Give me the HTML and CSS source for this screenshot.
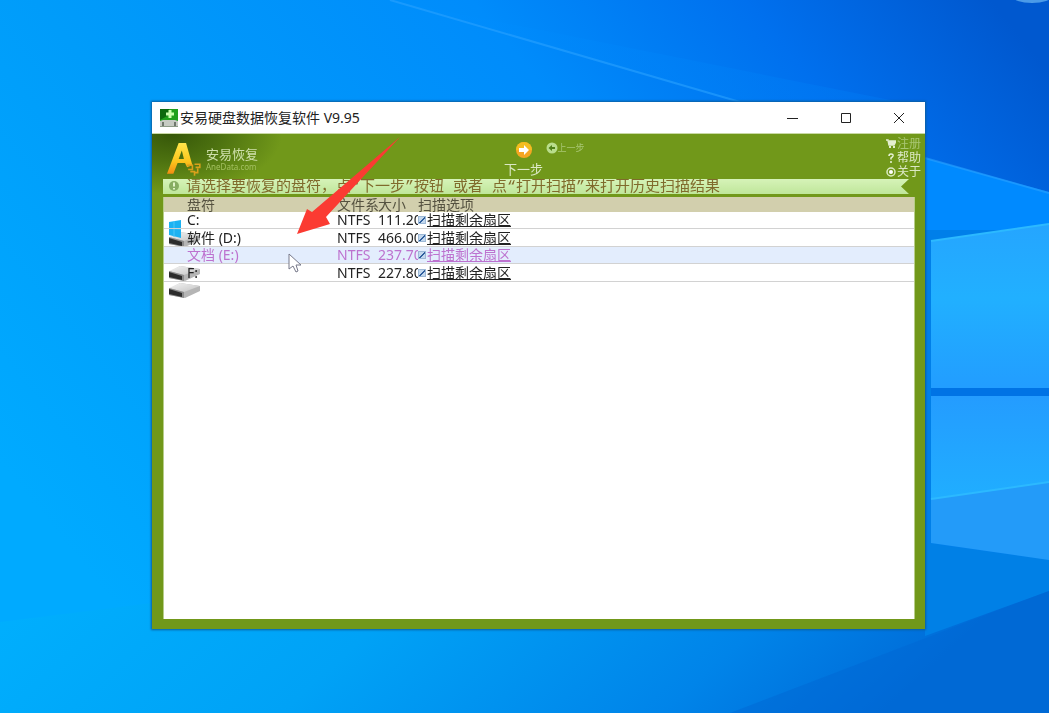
FILE: index.html
```html
<!DOCTYPE html>
<html lang="zh-CN">
<head>
<meta charset="utf-8">
<title>安易硬盘数据恢复软件 V9.95</title>
<link rel="stylesheet" href="styles.css">
</head>
<body>
<svg class="wallpaper" viewBox="0 0 1049 713" preserveAspectRatio="none" aria-hidden="true">
  <defs>
    <linearGradient id="sky" x1="0" y1=".65" x2="1" y2=".1">
      <stop offset="0" stop-color="#00aaff"/><stop offset=".3" stop-color="#009cfa"/><stop offset=".62" stop-color="#008cfb"/><stop offset=".82" stop-color="#0070ee"/><stop offset="1" stop-color="#0058cf"/>
    </linearGradient>
    <linearGradient id="floor" x1="0" y1="0" x2="1" y2=".2">
      <stop offset="0" stop-color="#00b2ff"/><stop offset=".45" stop-color="#00a2f6"/><stop offset=".8" stop-color="#0084e9"/><stop offset="1" stop-color="#006cd8"/>
    </linearGradient>
    <linearGradient id="edge" x1="0" y1="0" x2="1" y2="0">
      <stop offset="0" stop-color="#0091ff"/><stop offset="1" stop-color="#0076f2"/>
    </linearGradient>
    <linearGradient id="pane" x1="0" y1="0" x2="0" y2="1">
      <stop offset="0" stop-color="#25a5ff"/><stop offset=".45" stop-color="#21b0ff"/><stop offset="1" stop-color="#229dff"/>
    </linearGradient>
    <linearGradient id="pane2" x1="0" y1="0" x2="0" y2="1">
      <stop offset="0" stop-color="#249cff"/><stop offset="1" stop-color="#20aeff"/>
    </linearGradient>
  </defs>
  <rect width="1049" height="713" fill="url(#sky)"/>
  <path d="M0 622L152 603L925 520L1049 540V713H0z" fill="url(#floor)"/>
  <path d="M390 0L740 102H925V160L1049 193V300H900V102z" fill="url(#edge)" opacity=".35"/>
  <path d="M925 158L1049 192V240H925z" fill="#008aff"/>
  <path d="M390 0L740 102M925 158L1049 193" stroke="#2aa2ff" stroke-width="2" opacity=".6"/>
  <path d="M925 230H1049V560H925z" fill="#007fe9"/>
  <path d="M925 543L1049 560V591L925 636z" fill="#0080e6"/>
  <path d="M1049 591L730 713H1049z" fill="#0066d3" opacity=".45"/>
  <path d="M931 241L1049 224V388H931z" fill="url(#pane)"/>
  <path d="M931 388H1049V396H931z" fill="#0073e5"/>
  <path d="M931 396H1049V482L931 499z" fill="url(#pane2)"/>
  <path d="M931 499L1049 482V560L931 543z" fill="#239bf9"/>
  <path d="M931 499L1049 482M931 241L1049 224" stroke="#2cb9ff" stroke-width="2"/>
  <ellipse cx="1032" cy="-4" rx="20" ry="7" fill="#4b9be8"/>
</svg>

<main class="desktop">
  <section class="window">
    <header class="titlebar">
      <svg class="app-icon" viewBox="0 0 18 18" aria-hidden="true">
        <rect width="18" height="18" fill="#8d9b88"/><rect width="18" height="12" fill="#1fa01c"/><path d="M0 0H9V6L0 11z" fill="#0c6a0d"/>
        <path d="M10 1v8M6 5h8" stroke="#c9ffae" stroke-width="3"/><path d="M0 12L3 11H15L18 12V17H0z" fill="#c6cbc3"/><path d="M3 13v4M15 13v4" stroke="#6f776d" stroke-width="2"/>
      </svg>
      <h1 class="title">安易硬盘数据恢复软件 V9.95</h1>
      <div class="controls">
        <button type="button" aria-label="最小化"><svg viewBox="0 0 12 12"><path d="M0 6.5H11"/></svg></button>
        <button type="button" aria-label="最大化"><svg viewBox="0 0 12 12"><path d="M1.500 1.500H10.500V10.500H1.500z"/></svg></button>
        <button type="button" aria-label="关闭"><svg viewBox="0 0 12 12"><path d="M1 1L11 11M11 1L1 11"/></svg></button>
      </div>
    </header>

    <div class="body">
      <div class="toolbar">
        <div class="brand">
          <svg class="logo" viewBox="0 0 34 34" aria-hidden="true">
            <defs><linearGradient id="gold" x1="0" y1="0" x2="0" y2="1"><stop offset="0" stop-color="#ffe54a"/><stop offset=".6" stop-color="#fbc51c"/><stop offset="1" stop-color="#f28d13"/></linearGradient></defs>
            <path fill="url(#gold)" fill-rule="evenodd" d="M11 0H18L24 21L19 23L17 19H10L6 29H0zM14 7L11 15H16z"/>
            <path d="M19 21h5v4h-4M26 20h5v3h-4M22 27h4v4M29 24v4h-3" fill="none" stroke="#d9a01b" stroke-width="1.500"/>
          </svg>
          <div class="brand-text"><span class="brand-name">安易恢复</span><span class="brand-site">AneData.com</span></div>
        </div>
        <nav class="steps">
          <button type="button" class="step next">
            <svg viewBox="0 0 18 18" aria-hidden="true"><circle cx="9" cy="9" r="8" fill="#f5a623"/><path d="M1 9a8 8 0 0 1 16 0z" fill="#f3be20"/><path d="M4 7H9V4L14 9L9 14V11H4z" fill="#fff"/></svg>
            <span>下一步</span>
          </button>
          <button type="button" class="step prev" disabled>
            <svg viewBox="0 0 12 12" aria-hidden="true"><circle cx="6" cy="6" r="5.500" fill="#b9dd8c"/><path d="M9 5H6V3L2.500 6L6 9V7H9z" fill="#4f8118"/></svg>
            <span>上一步</span>
          </button>
        </nav>
        <nav class="links">
          <a href="#register" class="dim"><svg viewBox="0 0 10 10"><path d="M0 1H2L3 6H8L10 2H3M3 3.500H9M3 5H8" fill="none" stroke="#e4efcf" stroke-width="1.500"/><path d="M3 8h2M7 8h2" stroke="#e4efcf" stroke-width="2"/></svg>注册</a>
          <a href="#help"><svg viewBox="0 0 10 10"><path d="M3 3Q3 1 5 1Q7.500 1 7 3Q6.500 4 5 5V6.500M5 8v2" fill="none" stroke="#e9f3d8" stroke-width="1.500"/></svg>帮助</a>
          <a href="#about"><svg viewBox="0 0 10 10"><circle cx="5" cy="5" r="4" fill="none" stroke="#dcebc2" stroke-width="1.500"/><circle cx="5" cy="5" r="2" fill="#fff"/></svg>关于</a>
        </nav>
      </div>

      <div class="hint">
        <svg class="info" viewBox="0 0 12 12" aria-hidden="true"><circle cx="6" cy="6" r="5" fill="#86ad62"/><path d="M6 2.500v4M6 8v1.500" stroke="#dff3c8" stroke-width="2"/></svg>
        <p>请选择要恢复的盘符，点“下一步”按钮 或者 点“打开扫描”来打开历史扫描结果</p>
      </div>

      <div class="list">
        <table>
          <colgroup><col class="c-name"><col class="c-fs"><col class="c-size"><col></colgroup>
          <thead><tr><th>盘符</th><th>文件系</th><th>大小</th><th>扫描选项</th></tr></thead>
          <tbody>
            <tr><td>C:</td><td>NTFS</td><td>111.20</td><td><label><input type="checkbox" checked><span>扫描剩余扇区</span></label></td></tr>
            <tr><td>软件 (D:)</td><td>NTFS</td><td>466.00</td><td><label><input type="checkbox" checked><span>扫描剩余扇区</span></label></td></tr>
            <tr class="active"><td>文档 (E:)</td><td>NTFS</td><td>237.70</td><td><label><input type="checkbox" checked><span>扫描剩余扇区</span></label></td></tr>
            <tr><td>F:</td><td>NTFS</td><td>227.80</td><td><label><input type="checkbox" checked><span>扫描剩余扇区</span></label></td></tr>
          </tbody>
        </table>
        <svg class="drives" viewBox="0 0 40 90" aria-hidden="true">
          <defs>
            <linearGradient id="metal" x1="0" y1="0" x2="1" y2="1"><stop offset="0" stop-color="#f4f4f4"/><stop offset="1" stop-color="#c2c2c2"/></linearGradient>
            <g id="drive"><path d="M0 6L11 0L31 3V8L16 15L0 12z" fill="#b5b5b5"/><path d="M0 5L11 0L31 3L15 9z" fill="url(#metal)"/><path d="M0 5L15 9V15L0 12z" fill="#8b8b8b"/><path d="M0 6L13 10V14L0 11z" fill="#2c2c2c"/></g>
            <clipPath id="cut"><path d="M0 0H40V14H0z"/></clipPath>
          </defs>
          <g transform="translate(5 21)" clip-path="url(#cut)"><use href="#drive"/></g>
          <path d="M5 11L17 9V27L5 24z" fill="#1cb2f2"/><path d="M10 10V26M5 17.500L17 18" stroke="#4cc6f8" fill="none"/>
          <use href="#drive" x="5" y="55"/>
          <use href="#drive" x="5" y="72"/>
        </svg>
      </div>
    </div>
  </section>
</main>

<svg class="arrow" viewBox="0 0 104 100" aria-hidden="true"><path d="M103 1L29 81L33 88L0 98L10 73L15 76z" fill="#fb3b32"/></svg>
<svg class="cursor" viewBox="0 0 14 20" aria-hidden="true"><path d="M1 1V16L5 13L8 19L10 18L8 12H13z" fill="#fff" stroke="#77798a"/></svg>
</body>
</html>
```
FILE: styles.css
```css
* { box-sizing: border-box; }
body { margin: 0; font: 14px/17px "Noto Sans", "Noto Sans CJK SC", sans-serif; color: #222; }
button { border: 0; padding: 0; background: none; font: inherit; color: inherit; }
svg { display: block; flex: none; }

.wallpaper { position: fixed; inset: 0; width: 100%; height: 100%; z-index: -1; }
.desktop { display: flex; min-height: 100vh; padding: 102px 124px 84px 152px; }
.window { display: flex; flex: 1; flex-direction: column; min-width: 0; background: #71981a; box-shadow: 0 0 2px 1px #0b5d9c; }

.titlebar { display: flex; align-items: center; height: 32px; padding-left: 8px; background: #fff; border-bottom: 1px solid #c9d9a4; }
.app-icon { width: 18px; height: 18px; }
.title { flex: 1; margin: 0 0 0 2px; font-size: 14px; font-weight: 400; line-height: 20px; }
.controls { display: flex; }
.controls button { display: grid; place-items: center; width: 53px; height: 31px; }
.controls svg { width: 12px; height: 12px; fill: none; stroke: #222; }

.body { display: flex; flex: 1; flex-direction: column; padding: 0 10px 10px 11px; background: radial-gradient(ellipse 110px 60px at 20px 0, #365709 0, #4d7210 45%, #71981a 100%) no-repeat; }
.toolbar { display: flex; justify-content: space-between; height: 45px; margin-right: -6px; }
.brand { display: flex; flex: 1; gap: 3px; padding: 9px 0 0 4px; }
.logo { width: 36px; height: 36px; }
.brand-text { display: flex; flex-direction: column; padding-top: 4px; color: #cfe0ac; }
.brand-name { font-size: 13px; line-height: 15px; }
.brand-site { font-size: 8px; line-height: 9px; color: #a3c060; }
.steps { display: flex; gap: 2px; color: #dbe8c4; }
.step { display: flex; align-items: center; }
.next { flex-direction: column; align-items: center; justify-content: space-between; width: 40px; padding: 7px 0 3px; }
.next svg { width: 18px; height: 18px; }
.next span { font-size: 13px; line-height: 13px; white-space: nowrap; }
.prev { align-items: flex-start; padding-top: 8px; }
.prev svg { width: 12px; height: 12px; }
.prev span { font-size: 9px; line-height: 12px; white-space: nowrap; color: #a9c774; }
.links { display: flex; flex: 1; flex-direction: column; align-items: flex-end; padding-top: 3px; }
.links a { display: flex; align-items: center; gap: 1px; color: #dbe8c4; font-size: 12px; line-height: 14px; text-decoration: none; }
.links .dim { color: #a9c774; }
.links svg { width: 10px; height: 10px; }

.hint { display: flex; gap: 6px; height: 15px; margin-right: 6px; padding-left: 5px; overflow: hidden; background: linear-gradient(#d6f3b8, #bfe69a); clip-path: polygon(0 0, 100% 0, calc(100% - 8px) 50%, 100% 100%, 0 100%); }
.hint p { margin: 0; color: #806b2c; font-family: "Liberation Mono", "Noto Sans CJK SC", monospace; font-size: 15px; line-height: 18px; white-space: nowrap; }
.info { width: 12px; height: 12px; margin-top: 1px; }

.list { position: relative; isolation: isolate; flex: 1; margin-top: 3px; background: #fff; border-left: 1px solid #b7cd89; border-right: 1px solid #b7cd89; }
table { width: 100%; table-layout: fixed; border-collapse: separate; border-spacing: 0; }
.c-name { width: 173px; }
.c-fs { width: 41px; }
.c-size { width: 40px; }
th, td { padding: 0; overflow: hidden; text-align: left; font-weight: 400; white-space: nowrap; line-height: 16px; }
th { height: 15px; line-height: 15px; background: #d2cfad; color: #555240; }
td { height: 17px; border-bottom: 1px solid #d2d2d2; }
tr:nth-child(even) td { height: 18px; }
th:first-child, td:first-child { padding-left: 23px; }
.active td { background: #e3edfd; color: #bd72cf; }
td:first-child { position: relative; z-index: 1; }
label { display: flex; align-items: center; gap: 1px; height: 16px; }
label span { text-decoration: underline; }
input { appearance: none; width: 8px; height: 8px; margin: 0; background: linear-gradient(135deg, transparent 45%, #2f5f9e 45% 65%, transparent 65%) #c3d8ee; border: 1px solid #9cb8d6; }
.drives { position: absolute; left: 0; top: 14px; width: 40px; height: 90px; }

.arrow { position: absolute; left: 297px; top: 136px; width: 104px; height: 100px; }
.cursor { position: absolute; left: 288px; top: 253px; width: 14px; height: 20px; }
```
